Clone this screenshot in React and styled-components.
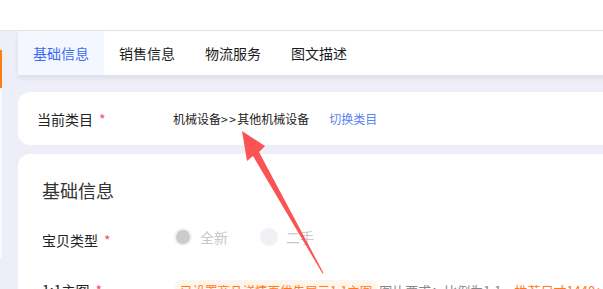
import styled, { createGlobalStyle } from "styled-components";

const GlobalStyle = createGlobalStyle`
  html, body {
    margin: 0;
    padding: 0;
    background: #eeeef8;
    overflow: hidden;
    font-family: "Noto Sans CJK SC", "Noto Sans", sans-serif;
  }
`;

const tabs = ["基础信息", "销售信息", "物流服务", "图文描述"];

const App = () => {
  return (
    <Page>
      <GlobalStyle />
      <Header />
      <Body>
        <SideEdge>
          <ActiveMark />
        </SideEdge>
        <Main>
          <TabBar>
            {tabs.map((t, i) => (
              <Tab key={t} active={i === 0}>{t}</Tab>
            ))}
          </TabBar>

          <Card $compact>
            <Label $w={136}>当前类目<Star>*</Star></Label>
            <Category>
              机械设备<Sep>&gt;&gt;</Sep>其他机械设备
            </Category>
            <SwitchLink>切换类目</SwitchLink>
          </Card>

          <Card>
            <Section>
              <Heading>基础信息</Heading>
              <Row>
                <Label $w={132}>宝贝类型<Star>*</Star></Label>
                <RadioGroup>
                  <RadioItem>
                    <Radio checked />
                    <RadioText>全新</RadioText>
                  </RadioItem>
                  <RadioItem>
                    <Radio />
                    <RadioText>二手</RadioText>
                  </RadioItem>
                </RadioGroup>
              </Row>
              <Row $top={22}>
                <Label $w={132}>1:1主图<Star>*</Star></Label>
                <Tip>已设置商品详情页优先展示1:1主图</Tip>
                <Hint>
                  图片要求：比例为1:1，<Orange>推荐尺寸1440×1440</Orange>
                </Hint>
              </Row>
            </Section>
          </Card>
        </Main>
      </Body>

      <Arrow viewBox="0 0 603 289" width="603" height="289">
        <polygon
          points="242,131 265,146 259,152 323.5,273 322.5,273.5 253,156 247,161"
          fill="#fb5353"
        />
      </Arrow>
    </Page>
  );
};

export default App;

const Page = styled.div`
  position: relative;
  width: 603px;
  height: 289px;
  overflow: hidden;
`;

const Header = styled.div`
  height: 30px;
  background: #fff;
  border-bottom: 1px solid #e3e3ea;
`;

const Body = styled.div`
  display: flex;
`;

const SideEdge = styled.div`
  width: 2px;
  height: 208px;
  margin-top: 19px;
  background: #f8f8fd;
  border-radius: 0 0 2px 0;
  flex-shrink: 0;
`;

const ActiveMark = styled.div`
  height: 38px;
  background: #ff7d0d;
`;

const Main = styled.div`
  margin-left: 16px;
  width: 620px;
  flex-shrink: 0;
`;

const TabBar = styled.div`
  display: flex;
  height: 44px;
  background: #fff;
  box-shadow: 0 3px 5px rgba(0, 0, 0, 0.08);
`;

const Tab = styled.div`
  padding: 0 15px;
  display: flex;
  align-items: center;
  font-size: 14px;
  color: ${(p) => (p.active ? "#3d6cf4" : "#1a1a1a")};
  background: ${(p) => (p.active ? "#f4f7ff" : "transparent")};
`;

const Card = styled.div`
  background: #fff;
  border-radius: 12px;
  display: flex;
  align-items: center;
  margin-top: ${(p) => (p.$compact ? "17px" : "9px")};
  height: ${(p) => (p.$compact ? "53px" : "auto")};
  padding-left: ${(p) => (p.$compact ? "19px" : "24px")};
`;

const Section = styled.div`
  padding-top: 24px;
  padding-bottom: 40px;
`;

const Heading = styled.div`
  font-size: 18px;
  line-height: 24px;
  color: #333;
`;

const Row = styled.div`
  display: flex;
  align-items: center;
  height: 28px;
  margin-top: ${(p) => p.$top || 24}px;
`;

const Label = styled.div`
  width: ${(p) => p.$w}px;
  flex-shrink: 0;
  font-size: 14px;
  color: #222;
  white-space: nowrap;
`;

const Star = styled.span`
  color: #f5515f;
  margin-left: 6px;
`;

const Category = styled.div`
  font-size: 12px;
  color: #222;
  white-space: nowrap;
`;

const Sep = styled.span`
  letter-spacing: 1.5px;
`;

const SwitchLink = styled.div`
  font-size: 12px;
  color: #5b80f2;
  margin-left: 20px;
`;

const RadioGroup = styled.div`
  display: flex;
  gap: 32px;
  margin-top: -6px;
`;

const RadioItem = styled.div`
  display: flex;
  align-items: center;
  gap: 8px;
`;

const Radio = styled.span`
  width: 14px;
  height: 14px;
  border-radius: 50%;
  border: 2px solid #f0f0f5;
  background: ${(p) => (p.checked ? "#cbcbcb" : "#f0f1f5")};
`;

const RadioText = styled.span`
  font-size: 14px;
  color: #c8c8c8;
`;

const Tip = styled.div`
  background: #fff5eb;
  border-radius: 6px;
  padding: 1px 5px;
  font-size: 12.5px;
  color: #ff7a1a;
  white-space: nowrap;
  margin-left: 1px;
`;

const Hint = styled.div`
  font-size: 13px;
  color: #888;
  white-space: nowrap;
  margin-left: 2px;
`;

const Orange = styled.span`
  color: #ff7a1a;
`;

const Arrow = styled.svg`
  position: absolute;
  top: 0;
  left: 0;
  pointer-events: none;
`;
